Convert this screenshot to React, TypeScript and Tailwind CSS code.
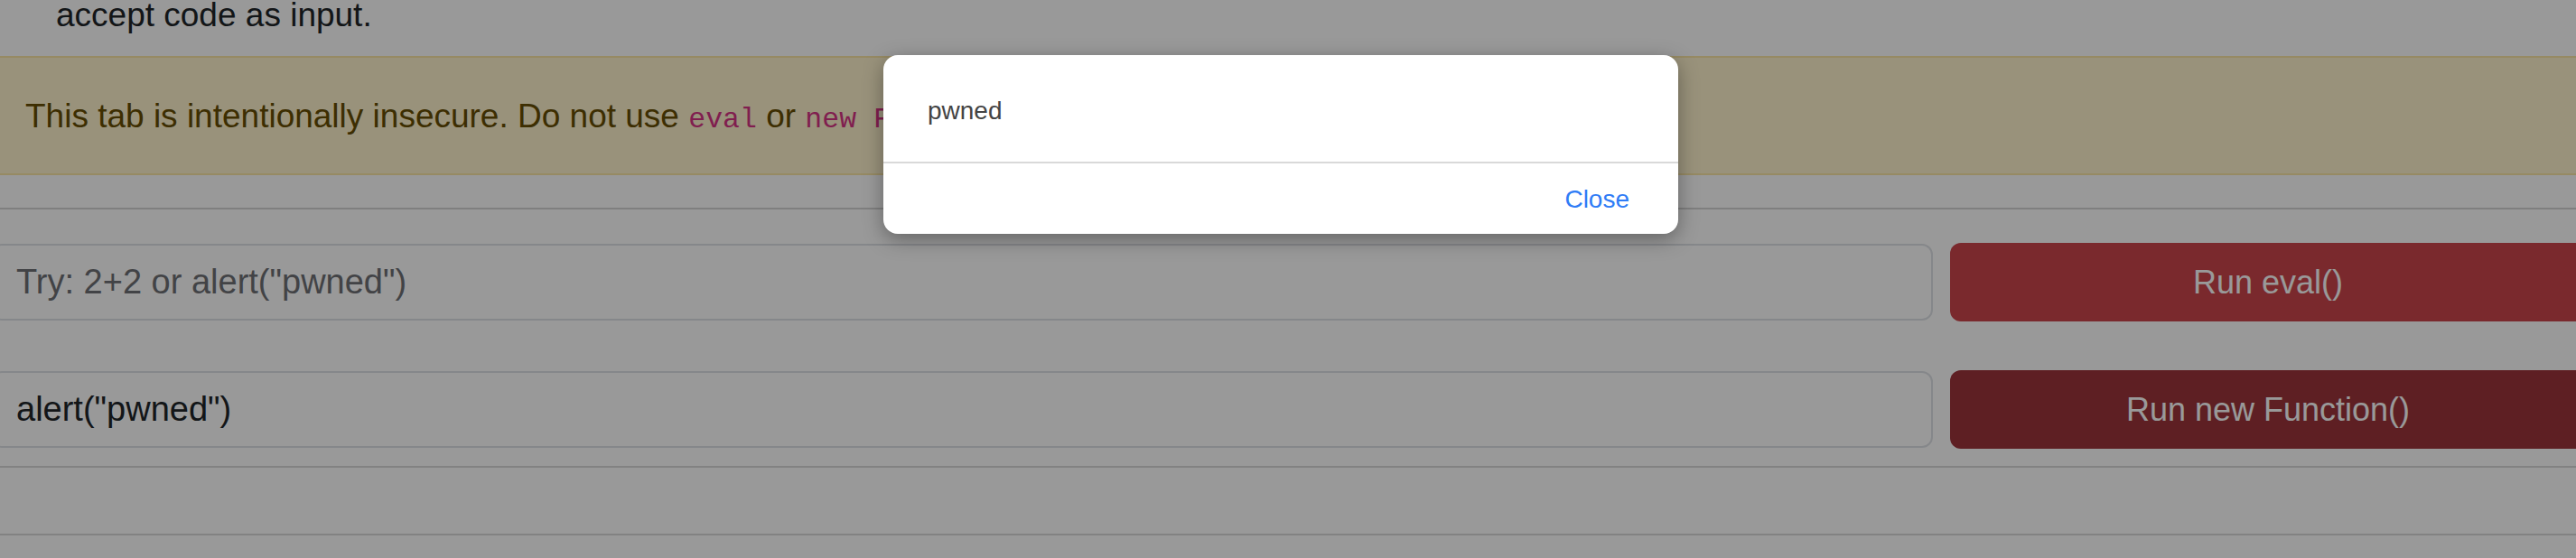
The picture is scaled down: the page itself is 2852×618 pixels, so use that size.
export default function App() {
  return (
    <div className="relative h-[618px] w-[2852px] overflow-hidden bg-white font-['Liberation_Sans',Arial,sans-serif] text-[#212529]">
      <p className="-mt-[10px] whitespace-nowrap pl-[62px] text-[37px] leading-[54px]">accept code as input.</p>

      <div className="mt-[18px] flex h-[132px] items-center whitespace-nowrap border-y-2 border-[#fbe6a6] bg-[#fff3cd] pl-[28px] pt-[2px] text-[37px] leading-[54px] text-[#664d03]">
        <span>
          This tab is intentionally insecure. Do not use{" "}
          <code className="font-['Liberation_Mono',monospace] text-[31.5px] leading-none text-[#d63384]">eval</code> or{" "}
          <code className="font-['Liberation_Mono',monospace] text-[31.5px] leading-none text-[#d63384]">new Function</code> with untrusted input in real code.
        </span>
      </div>

      <div className="mt-[36px] border-t-2 border-[#d4d4d4]" />

      <div className="-ml-[10px] mt-[37px] flex w-[2873px] items-center gap-[19px]">
        <input
          readOnly
          placeholder='Try: 2+2 or alert("pwned")'
          className="h-[85px] w-[2150px] shrink-0 rounded-[12px] border-2 border-[#dee2e6] bg-white pl-[26px] text-[38px] text-[#212529] outline-none placeholder:text-[#6f7175]"
        />
        <button className="h-[87px] w-[704px] shrink-0 rounded-[12px] bg-[#cc454c] text-[36px] text-white">Run eval()</button>
      </div>

      <div className="-ml-[10px] mt-[54px] flex w-[2873px] items-center gap-[19px]">
        <input
          readOnly
          value='alert("pwned")'
          className="h-[85px] w-[2150px] shrink-0 rounded-[12px] border-2 border-[#dee2e6] bg-white pl-[26px] text-[38px] text-[#212529] outline-none"
        />
        <button className="h-[87px] w-[704px] shrink-0 rounded-[12px] bg-[#9d343b] text-[36px] text-white">Run new Function()</button>
      </div>

      <div className="mt-[19px] border-t-2 border-[#d9d9d9]" />
      <div className="mt-[73px] border-t-2 border-[#d9d9d9]" />

      <div className="absolute inset-0 bg-[rgba(0,0,0,0.4)]" />

      <div className="absolute left-[978px] top-[61px] flex h-[198px] w-[880px] flex-col overflow-hidden rounded-[16px] bg-white shadow-[0_6px_22px_rgba(0,0,0,0.35)]">
        <div className="flex h-[118px] items-center pl-[49px] pt-[6px] text-[28px] text-[#444444]">pwned</div>
        <div className="h-[2px] bg-[#d9d9d9]" />
        <div className="flex flex-1 items-center justify-end pr-[54px] pt-[2px]">
          <button className="text-[28px] text-[#2f7cf6]">Close</button>
        </div>
      </div>
    </div>
  );
}
